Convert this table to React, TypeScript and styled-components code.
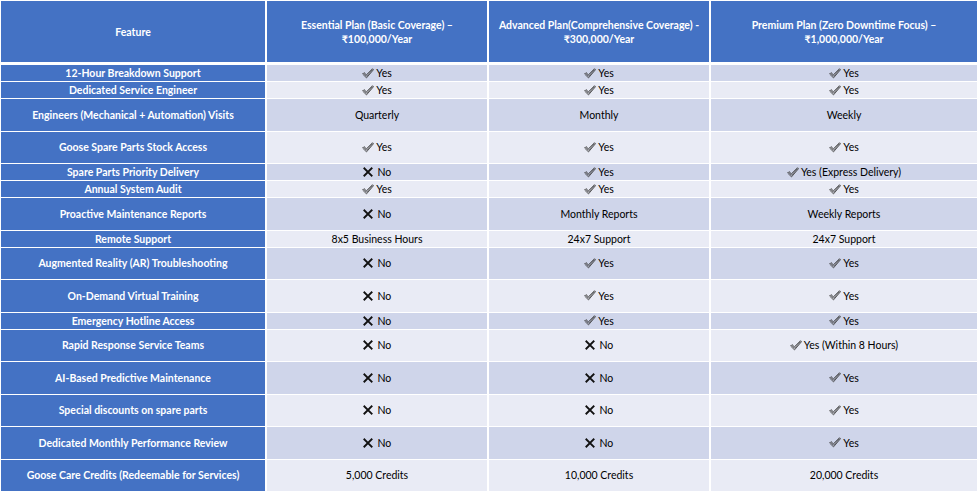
import React from "react";
import styled, { createGlobalStyle } from "styled-components";

const GlobalStyle = createGlobalStyle`
  html, body {
    margin: 0;
    padding: 0;
    background: #ffffff;
  }
  body {
    font-family: Lato, "Liberation Sans", sans-serif;
  }
`;

type Value = "yes" | "no" | string;

interface Feature {
  name: string;
  tall?: boolean;
  values: [Value, Value, Value];
}

const plans = [
  ["Essential Plan (Basic Coverage) –", "₹100,000/Year"],
  ["Advanced Plan(Comprehensive Coverage) -", "₹300,000/Year"],
  ["Premium Plan (Zero Downtime Focus) –", "₹1,000,000/Year"],
];

const features: Feature[] = [
  { name: "12-Hour Breakdown Support", values: ["yes", "yes", "yes"] },
  { name: "Dedicated Service Engineer", values: ["yes", "yes", "yes"] },
  { name: "Engineers (Mechanical + Automation) Visits", tall: true, values: ["Quarterly", "Monthly", "Weekly"] },
  { name: "Goose Spare Parts Stock Access", tall: true, values: ["yes", "yes", "yes"] },
  { name: "Spare Parts Priority Delivery", values: ["no", "yes", "yes:Yes (Express Delivery)"] },
  { name: "Annual System Audit", values: ["yes", "yes", "yes"] },
  { name: "Proactive Maintenance Reports", tall: true, values: ["no", "Monthly Reports", "Weekly Reports"] },
  { name: "Remote Support", values: ["8x5 Business Hours", "24x7 Support", "24x7 Support"] },
  { name: "Augmented Reality (AR) Troubleshooting", tall: true, values: ["no", "yes", "yes"] },
  { name: "On-Demand Virtual Training", tall: true, values: ["no", "yes", "yes"] },
  { name: "Emergency Hotline Access", values: ["no", "yes", "yes"] },
  { name: "Rapid Response Service Teams", tall: true, values: ["no", "no", "yes:Yes (Within 8 Hours)"] },
  { name: "AI-Based Predictive Maintenance", tall: true, values: ["no", "no", "yes"] },
  { name: "Special discounts on spare parts", tall: true, values: ["no", "no", "yes"] },
  { name: "Dedicated Monthly Performance Review", tall: true, values: ["no", "no", "yes"] },
  { name: "Goose Care Credits (Redeemable for Services)", tall: true, values: ["5,000 Credits", "10,000 Credits", "20,000 Credits"] },
];

const Page = styled.div`
  padding: 1px 0 0 1px;
  width: 976px;
`;

const Table = styled.div`
  display: flex;
  flex-direction: column;
  gap: 1px;
`;

const Row = styled.div<{ $header?: boolean }>`
  display: grid;
  grid-template-columns: 264px 220px 220px 266px;
  column-gap: 2px;
  margin-bottom: ${(p) => (p.$header ? "2px" : "0")};
`;

const HeadCell = styled.div`
  height: 61px;
  background: #4472c4;
  color: #ffffff;
  font-weight: 700;
  font-size: 10.5px;
  line-height: 14px;
  display: flex;
  flex-direction: column;
  align-items: center;
  justify-content: center;
  text-align: center;
`;

const FeatureCell = styled.div<{ $tall?: boolean }>`
  height: ${(p) => (p.$tall ? "31.5px" : "16px")};
  background: #4472c4;
  color: #ffffff;
  font-weight: 700;
  font-size: 10.5px;
  display: flex;
  align-items: center;
  justify-content: center;
  white-space: nowrap;
`;

const ValueCell = styled.div<{ $tall?: boolean; $odd: boolean }>`
  height: ${(p) => (p.$tall ? "31.5px" : "16px")};
  background: ${(p) => (p.$odd ? "#cfd5ea" : "#e9ebf5")};
  color: #000000;
  font-size: 10.5px;
  display: flex;
  align-items: center;
  justify-content: center;
  gap: 2px;
  white-space: nowrap;
`;

const Icon = styled.svg`
  flex: none;
  display: block;
`;

const CheckIcon = () => (
  <Icon width="12" height="11" viewBox="0 0 12 11">
    <path
      d="M0.6 6 L2 4.6 L4.4 6.8 L10.5 0.7 L11.5 1.7 L4.5 9.9 Z M1.9 5.5 L4.5 8.3 L10.6 1.5"
      fill="none"
      stroke="#3a3a3a"
      strokeWidth="0.85"
      strokeLinejoin="round"
    />
  </Icon>
);

const CrossIcon = () => (
  <Icon width="10" height="10" viewBox="0 0 10 10">
    <path d="M1.4 1.4 L8.6 8.6 M8.6 1.4 L1.4 8.6" stroke="#111" strokeWidth="1.9" strokeLinecap="square" />
  </Icon>
);

const CellValue = ({ value }: { value: Value }) => {
  if (value === "no") {
    return (
      <>
        <CrossIcon />
        <span>&nbsp;No</span>
      </>
    );
  }
  if (value.startsWith("yes")) {
    const label = value.includes(":") ? value.split(":")[1] : "Yes";
    return (
      <>
        <CheckIcon />
        <span>{label}</span>
      </>
    );
  }
  return <span>{value}</span>;
};

export default function App() {
  return (
    <Page>
      <GlobalStyle />
      <Table>
        <Row $header>
          <HeadCell>Feature</HeadCell>
          {plans.map((plan) => (
            <HeadCell key={plan[0]}>
              <span>{plan[0]}</span>
              <span>{plan[1]}</span>
            </HeadCell>
          ))}
        </Row>
        {features.map((feature, i) => (
          <Row key={feature.name}>
            <FeatureCell $tall={feature.tall}>{feature.name}</FeatureCell>
            {feature.values.map((value, j) => (
              <ValueCell key={j} $tall={feature.tall} $odd={i % 2 === 0}>
                <CellValue value={value} />
              </ValueCell>
            ))}
          </Row>
        ))}
      </Table>
    </Page>
  );
}
